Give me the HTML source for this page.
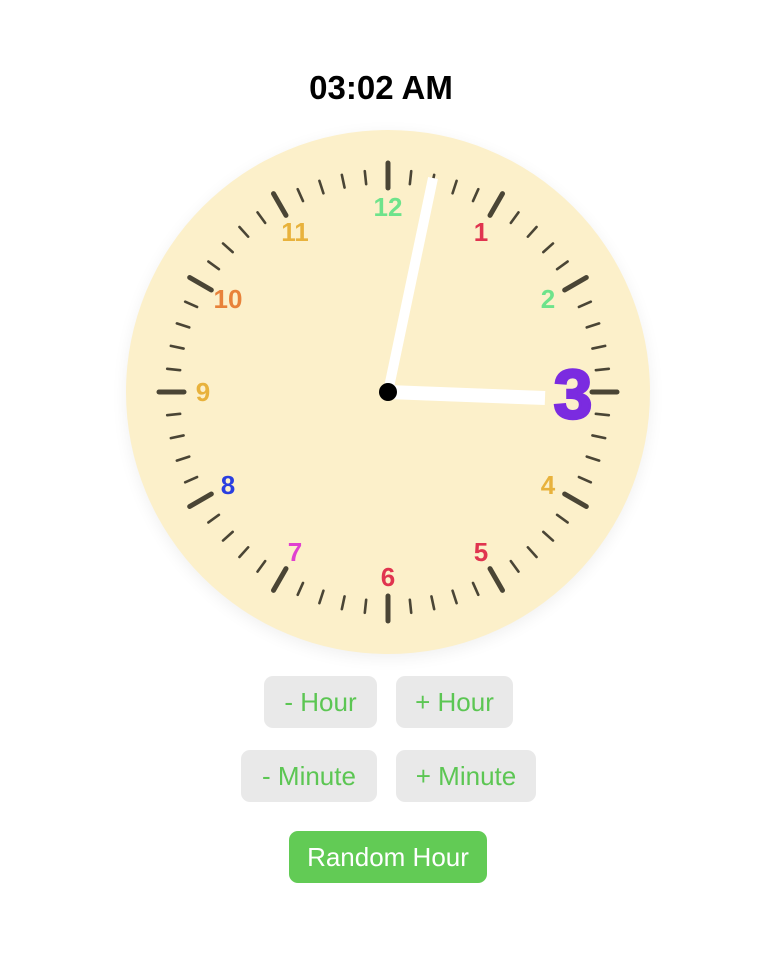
<!DOCTYPE html>
<html><head><style>
body{margin:0;width:762px;height:956px;background:#fff;font-family:"Liberation Sans",sans-serif;position:relative;overflow:hidden}
h1{position:absolute;top:69px;left:0;width:762px;text-align:center;margin:0;font-size:33px;font-weight:bold;color:#000}
.b{position:absolute;height:52px;border-radius:9px;background:#e9e9e9;color:#5cc653;font-size:26px;display:flex;align-items:center;justify-content:center}
</style></head><body>
<h1>03:02 AM</h1>
<svg width="762" height="956" style="position:absolute;left:0;top:0">
<defs><filter id="s" x="-20%" y="-20%" width="140%" height="140%"><feGaussianBlur stdDeviation="8"/></filter></defs>
<circle cx="388" cy="396" r="262" fill="#000" opacity="0.06" filter="url(#s)"/>
<circle cx="388" cy="392" r="262" fill="#fcf0ca"/>
<g id="t" stroke="#4a4535" stroke-linecap="round"></g>
<g font-weight="bold" font-size="26" text-anchor="middle" font-family="Liberation Sans,sans-serif">
<text x="388" y="216" fill="#6ee38b">12</text>
<text x="481" y="241" fill="#e0344f">1</text>
<text x="548" y="308" fill="#6ee38b">2</text>
<text x="548" y="494" fill="#e8b23c">4</text>
<text x="481" y="561" fill="#e0344f">5</text>
<text x="388" y="586" fill="#e0344f">6</text>
<text x="295" y="561" fill="#e040d0">7</text>
<text x="228" y="494" fill="#2a3fe0">8</text>
<text x="203" y="401" fill="#e8b23c">9</text>
<text x="228" y="308" fill="#e8823a">10</text>
<text x="295" y="241" fill="#e8b23c">11</text>
</g>
<line x1="388" y1="392" x2="433" y2="178" stroke="#fff" stroke-width="10"/>
<line x1="388" y1="392" x2="545" y2="398" stroke="#fff" stroke-width="14"/>
<circle cx="388" cy="392" r="9" fill="#000"/>
<text x="573" y="418" fill="#7b2be0" font-size="70" font-weight="bold" text-anchor="middle" stroke="#7b2be0" stroke-width="2.5" font-family="Liberation Sans,sans-serif">3</text>
</svg>
<div class="b" style="left:264px;top:676px;width:113px">- Hour</div>
<div class="b" style="left:396px;top:676px;width:117px">+ Hour</div>
<div class="b" style="left:241px;top:750px;width:136px">- Minute</div>
<div class="b" style="left:396px;top:750px;width:140px">+ Minute</div>
<div class="b" style="left:289px;top:831px;width:198px;background:#62cb55;color:#fff">Random Hour</div>
<script>
var g=document.getElementById('t'),ns='http://www.w3.org/2000/svg';
for(var i=0;i<60;i++){var a=i*Math.PI/30,maj=i%5==0,ro=maj?229:222,ri=maj?204:209;
var l=document.createElementNS(ns,'line');
l.setAttribute('x1',388+ro*Math.sin(a));l.setAttribute('y1',392-ro*Math.cos(a));
l.setAttribute('x2',388+ri*Math.sin(a));l.setAttribute('y2',392-ri*Math.cos(a));
l.setAttribute('stroke-width',maj?5:2.6);g.appendChild(l);}
</script>
</body></html>
